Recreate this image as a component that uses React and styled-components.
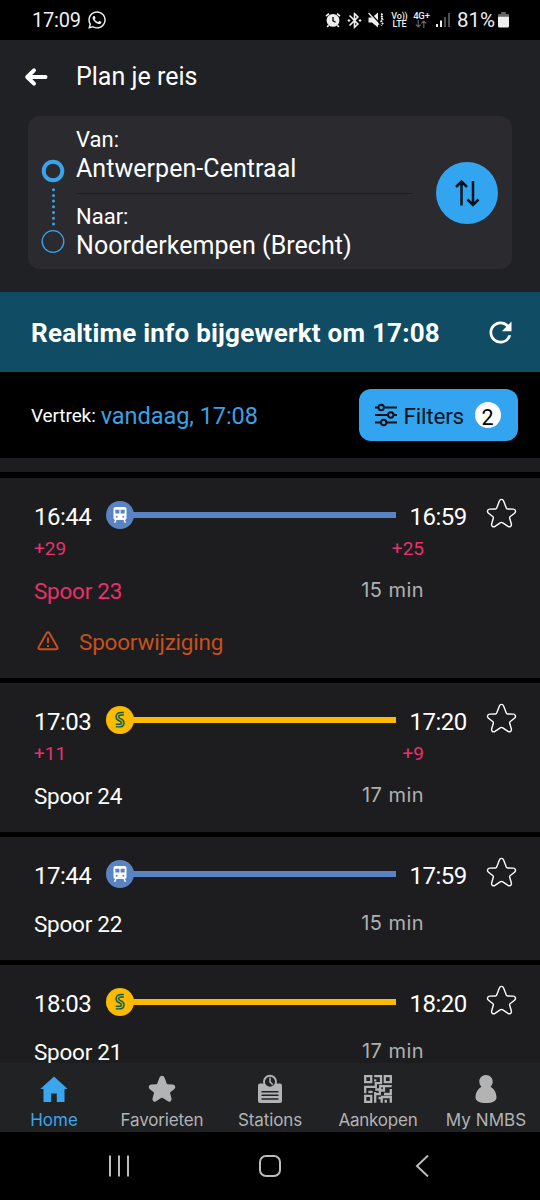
import React, { useState } from 'react';
import styled, { createGlobalStyle } from 'styled-components';
import { FaWhatsapp } from 'react-icons/fa';
import { MdRefresh, MdBluetoothConnected } from 'react-icons/md';

const GlobalStyle = createGlobalStyle`
* {
    box-sizing: border-box;
}

body {
    margin: 0;
    background: #000;
    color: #fff;
    font-family: Roboto, sans-serif;
}

button {
    font: inherit;
    color: inherit;
    background: none;
    border: 0;
    padding: 0;
    cursor: pointer;
}

svg {
    display: block;
    flex: none;
}
`

const Screen = styled.div`
width: 540px;
height: 1200px;
display: flex;
flex-direction: column;
overflow: hidden;
background: #000;
white-space: nowrap;
`

const Label = styled.span`
font-size: ${p => p.$size}px;
line-height: 28px;
letter-spacing: ${p => p.$spacing || 0}px;
color: ${p => p.$color || 'inherit'};
`

/* status bar */

const StatusBar = styled.div`
flex: none;
height: 40px;
padding: 0 31px 0 32px;
display: flex;
align-items: center;
justify-content: space-between;
color: #eee;
`

const StatusLeft = styled.div`
display: flex;
align-items: center;
gap: 6px;
`

const StatusIcons = styled.div`
display: flex;
align-items: center;

> svg + svg {
    margin-left: 4px;
}
`

const TinyStack = styled.div`
width: 17px;
margin-left: ${p => p.$gap}px;
display: flex;
flex-direction: column;
align-items: center;
font-size: ${p => p.$size}px;
font-weight: 500;
line-height: 8.5px;
letter-spacing: -.2px;
`

const Battery = styled.div`
margin-left: 6px;
display: flex;
align-items: center;
gap: 3px;

span {
    margin-left: 4px;
}
`

/* header */

const Header = styled.header`
flex: none;
height: 252px;
background: #202124;
`

const TitleBar = styled.div`
height: 76px;
padding: 0 0 3px 24px;
display: flex;
align-items: center;
gap: 28px;
`

const RouteCard = styled.section`
height: 153px;
margin: 0 28px;
padding: 0 14px 0 13px;
border-radius: 12px;
background: #2b2b2f;
display: flex;
align-items: center;
`

const MarkerSlot = styled.div`
padding-top: 26px;
`

const Stops = styled.div`
width: 337px;
margin-left: 11px;
display: flex;
flex-direction: column;
`

const Stop = styled.div`
height: 76px;
padding-top: 9px;
display: flex;
flex-direction: column;
gap: 1px;

& + & {
    border-top: 1px solid #1e1f22;
}
`

const SwapButton = styled.button`
width: 62px;
height: 62px;
margin-left: auto;
border-radius: 50%;
background: #33a5f0;
display: flex;
align-items: center;
justify-content: center;
`

/* realtime banner and filters */

const Banner = styled.div`
flex: none;
height: 80px;
padding: 2px 23px 0 31px;
display: flex;
align-items: center;
justify-content: space-between;
background: #104c64;
font-weight: 700;

svg {
    margin-bottom: 2px;
}
`

const FilterRow = styled.div`
flex: none;
height: 86px;
padding: 0 22.5px 0 31px;
display: flex;
align-items: center;
justify-content: space-between;
`

const Departure = styled.div`
display: flex;
align-items: center;
gap: 5px;
padding-top: 2px;
`

const FilterButton = styled.button`
width: 159px;
height: 52px;
padding: 0 17px 0 16px;
border-radius: 12px;
background: #33a5f0;
color: #07121b;
display: flex;
align-items: center;
gap: 7px;

> span {
    padding-top: 1px;
}
`

const Count = styled.span`
width: 26px;
height: 26px;
margin-left: auto;
border-radius: 50%;
background: #fff;
color: #000;
font-size: 21.5px;
line-height: 29px;
text-align: center;
`

/* trips */

const Results = styled.main`
flex: 1;
min-height: 0;
overflow: hidden;
display: flex;
flex-direction: column;
gap: 5px;
`

const PreviousTrip = styled.div`
flex: none;
height: 14px;
margin-bottom: 1px;
background: #1d1d1f;
`

const TripCard = styled.article`
flex: none;
padding: 20px 0 7px 34px;
background: #1d1d1f;
`

const TripTop = styled.div`
height: 38px;
display: flex;
align-items: center;
`

const Time = styled.time`
width: ${p => p.$width}px;
padding-bottom: 1px;
font-size: 24px;
line-height: 28px;
letter-spacing: -.5px;
`

const Line = styled.div`
width: 290px;
margin: 0 14px 4px 0;
display: flex;
align-items: center;
color: ${p => p.$color};

&::after {
    content: '';
    flex: 1;
    height: 6px;
    margin-left: -1px;
    background: currentColor;
}
`

const LineBadge = styled.span`
width: 28px;
height: 28px;
border-radius: 50%;
background: currentColor;
`

const StarButton = styled.button`
margin-bottom: 7px;
`

const TripRow = styled.div`
height: ${p => p.$height}px;
width: 390px;
padding-bottom: ${p => p.$lift || 0}px;
display: flex;
align-items: center;
justify-content: space-between;
`

const Duration = styled.span`
font-family: Inter, sans-serif;
font-size: 20px;
line-height: 28px;
color: #b0b0b2;
padding-bottom: 2px;
letter-spacing: .45px;
`

const Warning = styled.div`
height: 51.4px;
padding: 0 0 7.4px 3px;
display: flex;
align-items: center;
gap: 20px;
color: #c8501c;

svg {
    margin-bottom: 2px;
}
`

/* bottom navigation */

const TabBar = styled.nav`
flex: none;
height: 69px;
display: grid;
grid-template-columns: repeat(5, 108px);
background: #202224;
`

const Tab = styled.button`
padding-top: 11px;
display: flex;
flex-direction: column;
align-items: center;
gap: 4px;
color: ${p => p.$active ? '#3ba5ee' : '#b3b3b4'};
font-family: Inter, sans-serif;
font-size: 17px;
line-height: 24px;
letter-spacing: ${p => p.$spacing}px;
`

const TabIcon = styled.span`
height: 30px;
display: flex;
align-items: center;
`

const SystemBar = styled.div`
flex: none;
height: 68px;
padding: 0 42px 0 43px;
display: grid;
grid-template-columns: repeat(3, 1fr);
place-items: center;
color: #bdbdbd;
`

const AlarmIcon = () => (
    <svg width="16" height="16" viewBox="0 0 16 16" fill="none">
        <circle cx="8" cy="8.4" r="6.4" fill="#eee" />
        <path d="M1 4.2 4 1.6M15 4.2 12 1.6M3.6 13.2 2.2 15M12.4 13.2 13.8 15" stroke="#eee" strokeWidth="1.7" />
        <path d="M8 5v3.8l2.6 1.4" stroke="#000" strokeWidth="1.3" />
    </svg>
)

const MuteIcon = () => (
    <svg width="16" height="16" viewBox="0 0 16 16" fill="none">
        <path d="M.5 5.5H4l6-5v15l-6-5H.5z" fill="#eee" />
        <path d="M1.5 .5 11 10.5" stroke="#000" strokeWidth="1.4" />
        <path d="M.6 1 11 12.6" stroke="#eee" strokeWidth="1.3" />
        <path d="M13.2 1.5l1.4 2-1.4 2 1.4 2-1.4 2 1.4 2-1.4 2" stroke="#eee" strokeWidth="1.8" strokeDasharray="2 .8" />
    </svg>
)

const DataArrows = () => (
    <svg width="12" height="8" viewBox="0 0 12 8" fill="none" stroke="#666" strokeWidth="1.2">
        <path d="M3.2 0v7M.8 4.6l2.4 2.4 2.4-2.4M8.8 8V1M6.4 3.4 8.8 1l2.4 2.4" />
    </svg>
)

const SignalIcon = () => (
    <svg width="14" height="14" viewBox="0 0 14 14">
        <path d="M0 11h2v3H0zM4 7.5h2V14H4z" fill="#eee" />
        <path d="M8 4h2v10H8zM12 0h2v14h-2z" fill="#505050" />
    </svg>
)

const BatteryIcon = () => (
    <svg width="11" height="16" viewBox="0 0 12 16" preserveAspectRatio="none">
        <path d="M3.5 0h5v2H11a1 1 0 0 1 1 1v3H0V3a1 1 0 0 1 1-1h2.5z" fill="#666" />
        <path d="M0 4.8h12V14a1.5 1.5 0 0 1-1.5 1.5h-9A1.5 1.5 0 0 1 0 14z" fill="#eee" />
    </svg>
)

const BackArrow = () => (
    <svg width="24" height="20" viewBox="0 0 24 20" fill="none" stroke="#fff" strokeWidth="4" strokeLinecap="round" strokeLinejoin="round">
        <path d="M21.5 10H4M10 3.3 3.2 10l6.8 6.7" />
    </svg>
)

const RouteMarker = () => (
    <svg width="24" height="96" viewBox="0 0 24 96" fill="none" stroke="#38a4eb">
        <circle cx="12" cy="13" r="9.3" strokeWidth="4" />
        <path d="M12.5 31.7v34.7" strokeWidth="3" strokeLinecap="round" strokeDasharray="0 5.7" />
        <circle cx="12" cy="83.5" r="10.8" strokeWidth="1.3" />
    </svg>
)

const SwapIcon = () => (
    <svg width="26" height="30" viewBox="0 0 26 30" fill="none" stroke="#07121b" strokeWidth="2.5">
        <path d="M7.5 27.500V3.500M2 9l5.500-5.500L13 9M19 3v24M13.500 21.500 19 27l5.500-5.500" />
    </svg>
)

const FilterIcon = () => (
    <svg width="22" height="24" viewBox="0 0 22 24" fill="none" stroke="#07121b" strokeWidth="2">
        <path d="M0 4.5h3M9.5 4.5H22M0 12h12.5M19 12h3M0 19.5h5.5M12 19.5h10" />
        <circle cx="6.2" cy="4.5" r="2.7" />
        <circle cx="15.8" cy="12" r="2.7" />
        <circle cx="8.7" cy="19.5" r="2.7" />
    </svg>
)

const TrainIcon = () => (
    <svg width="28" height="28" viewBox="0 0 28 28">
        <path d="M9.5 6h9a2 2 0 0 1 2 2v9a2 2 0 0 1-2 2h-9a2 2 0 0 1-2-2V8a2 2 0 0 1 2-2z" fill="#fff" />
        <path d="M9.3 8.8h4.1v3.7H9.3zM14.6 8.8h4.1v3.7h-4.1z" fill="#5a83c4" />
        <circle cx="10.6" cy="15.8" r="1" fill="#5a83c4" />
        <circle cx="17.4" cy="15.8" r="1" fill="#5a83c4" />
        <path d="M10 18.5l-1.4 3.2M18 18.5l1.4 3.2" stroke="#fff" strokeWidth="1.5" />
    </svg>
)

const SuburbanIcon = () => (
    <svg width="28" height="28" viewBox="0 0 28 28" fill="none">
        <path d="M17.800 7.800h-2.600c-4.600 0-5 4.400-1.600 5.800 4.600 1.700 4 6-.4 6H9.800" stroke="#17594d" strokeWidth="4" />
        <path d="M18.200 7.800h-3c-4.600 0-5 4.400-1.600 5.800 4.600 1.700 4 6-.4 6H9.400" stroke="#b5bd2c" strokeWidth="1.100" />
    </svg>
)

const starPath = 'M12.9 2.4c.8-2 3.4-2 4.2 0l2.7 7.2c.2.6.7.9 1.300.9l5.600.1c2.300.1 3.100 2.700 1.300 4.100l-4.200 3.300c-.6.5-.8 1-.6 1.700l1.600 5.600c.6 2.300-1.400 3.700-3.300 2.500l-5.200-3.500c-.9-.6-1.700-.6-2.600 0l-5.200 3.500c-1.900 1.200-3.900-.2-3.300-2.500l1.600-5.600c.2-.7 0-1.200-.6-1.700L2 14.700c-1.800-1.400-1-4 1.300-4.100l5.600-.1c.6 0 1.100-.3 1.300-.9z'

const StarIcon = ({ size, filled }) => (
    <svg width={size} height={size} viewBox="-.5 -.5 31 31" fill={filled ? 'currentColor' : 'none'} stroke={filled ? 'currentColor' : '#fff'} strokeWidth="1.4">
        <path d={starPath} />
    </svg>
)

const WarningIcon = () => (
    <svg width="22" height="20" viewBox="0 0 22 20" fill="none" stroke="currentColor" strokeWidth="1.9" strokeLinejoin="round">
        <path d="M9.5 2.2 1.6 16.2c-.6 1.1-.1 2 1.2 2h16.4c1.3 0 1.8-.9 1.2-2L12.5 2.2c-.7-1.2-2.3-1.2-3 0z" />
        <path d="M11 6.5v5.8M11 14v2" />
    </svg>
)

const HomeIcon = () => (
    <svg width="28" height="28" viewBox="0 0 28 28" fill="currentColor">
        <path d="M14 1.500.3 14h3.200v13h7.700v-8.500h5.600V27h7.700V14h3.200z" />
    </svg>
)

const StationIcon = () => (
    <svg width="24" height="30" viewBox="0 0 24 30" fill="none">
        <rect y="9.5" width="24" height="19.5" rx="2" fill="currentColor" />
        <circle cx="12" cy="7.7" r="6" fill="#202224" stroke="currentColor" strokeWidth="1.9" />
        <path d="M12 3.5v4.4l2.8 2.8" stroke="currentColor" strokeWidth="1.5" />
        <path d="M3.5 17.700h17M3.500 21.300h17M3.500 24.900h17" stroke="#202224" strokeWidth="1.5" />
    </svg>
)

const CodeIcon = () => (
    <svg width="28" height="28" viewBox="0 0 28 28" fill="none" stroke="currentColor" strokeWidth="2.3">
        <path d="M1.2 1.2h6v6h-6zM20.8 1.2h6v6h-6zM1.2 20.8h6v6h-6z" />
        <path d="M10.2 1.2H17v7h-5.2v3.6H1.2v6.4M11.2 4.2v2.3M4.4 16.8h4.2M11.2 14.5h5V11.2h11.5M20 11v4.500h-4.200v3.600h-4.600M26.800 14v5H20M11.200 17v10.800M14.500 23h3.200v4.800M17 22h9.800v5.800M21.800 24.800v3" />
    </svg>
)

const PersonIcon = () => (
    <svg width="22" height="28" viewBox="0 0 22 28" fill="currentColor">
        <path d="M11 0c4 0 6.700 3 6.700 6.700 0 2.200-.9 3.700-2.200 5 3.900 2.200 6 6.500 6 10.800 0 3.500-4 5.500-10.500 5.500S.5 26 .5 22.500c0-4.300 2.100-8.600 6-10.800-1.300-1.300-2.200-2.800-2.200-5C4.300 3 7 0 11 0z" />
    </svg>
)

const lines = {
    train: { color: '#5a83c4', icon: <TrainIcon /> },
    suburban: { color: '#fcba00', icon: <SuburbanIcon /> },
}

const trips = [
    { id: 1, line: 'train', from: '16:44', to: '16:59', delays: ['+29', '+25'], platform: 'Spoor 23', duration: '15 min', changed: 'Spoorwijziging' },
    { id: 2, line: 'suburban', from: '17:03', to: '17:20', delays: ['+11', '+9'], platform: 'Spoor 24', duration: '17 min' },
    { id: 3, line: 'train', from: '17:44', to: '17:59', platform: 'Spoor 22', duration: '15 min' },
    { id: 4, line: 'suburban', from: '18:03', to: '18:20', platform: 'Spoor 21', duration: '17 min' },
]

const tabs = [
    { name: 'Home', icon: <HomeIcon />, spacing: 0 },
    { name: 'Favorieten', icon: <StarIcon size={28} filled />, spacing: -.15 },
    { name: 'Stations', icon: <StationIcon />, spacing: -.1 },
    { name: 'Aankopen', icon: <CodeIcon />, spacing: -.2 },
    { name: 'My NMBS', icon: <PersonIcon />, spacing: .1 },
]

const pink = '#e8306c'

const Trip = ({ trip }) => {
    const { color, icon } = lines[trip.line]

    return (
        <TripCard>
            <TripTop>
                <Time $width={71.5}>{trip.from}</Time>
                <Line $color={color}><LineBadge>{icon}</LineBadge></Line>
                <Time $width={76}>{trip.to}</Time>
                <StarButton aria-label="Favoriet"><StarIcon size={31} /></StarButton>
            </TripTop>
            {trip.delays && (
                <TripRow $height={26}>
                    {trip.delays.map(delay => <Label key={delay} $size={19} $color={pink}>{delay}</Label>)}
                </TripRow>
            )}
            <TripRow $height={58} $lift={1}>
                <Label $size={22.5} $spacing={-.25} $color={trip.changed && pink}>{trip.platform}</Label>
                <Duration>{trip.duration}</Duration>
            </TripRow>
            {trip.changed && (
                <Warning>
                    <WarningIcon />
                    <Label $size={22.5} $spacing={-.2}>{trip.changed}</Label>
                </Warning>
            )}
        </TripCard>
    )
}

const App = () => {

    const [active, setActive] = useState('Home')

    return (
        <Screen>
            <GlobalStyle />
            <StatusBar>
                <StatusLeft>
                    <Label $size={20} $spacing={-.2}>17:09</Label>
                    <FaWhatsapp size={20} />
                </StatusLeft>
                <StatusIcons>
                    <AlarmIcon />
                    <MdBluetoothConnected size={19} />
                    <MuteIcon />
                    <TinyStack $gap={7} $size={9}>
                        <span>Vo))</span>
                        <span>LTE</span>
                    </TinyStack>
                    <TinyStack $gap={5} $size={9.5}>
                        <span>4G+</span>
                        <DataArrows />
                    </TinyStack>
                    <Battery>
                        <SignalIcon />
                        <Label $size={20.5}>81%</Label>
                        <BatteryIcon />
                    </Battery>
                </StatusIcons>
            </StatusBar>

            <Header>
                <TitleBar>
                    <BackArrow />
                    <Label $size={25}>Plan je reis</Label>
                </TitleBar>
                <RouteCard>
                    <MarkerSlot>
                        <RouteMarker />
                    </MarkerSlot>
                    <Stops>
                        <Stop>
                            <Label $size={22}>Van:</Label>
                            <Label $size={25} $spacing={.05}>Antwerpen-Centraal</Label>
                        </Stop>
                        <Stop>
                            <Label $size={22}>Naar:</Label>
                            <Label $size={25} $spacing={.05}>Noorderkempen (Brecht)</Label>
                        </Stop>
                    </Stops>
                    <SwapButton aria-label="Wissel"><SwapIcon /></SwapButton>
                </RouteCard>
            </Header>

            <Banner>
                <Label $size={26} $spacing={.22}>Realtime info bijgewerkt om 17:08</Label>
                <MdRefresh size={33} />
            </Banner>

            <FilterRow>
                <Departure>
                    <Label $size={19} $spacing={-.1}>Vertrek:</Label>
                    <Label $size={23.5} $spacing={-.05} $color="#3ba0e6">vandaag, 17:08</Label>
                </Departure>
                <FilterButton>
                    <FilterIcon />
                    <Label $size={22.5} $spacing={-.2}>Filters</Label>
                    <Count>2</Count>
                </FilterButton>
            </FilterRow>

            <Results>
                <PreviousTrip />
                {trips.map(trip => <Trip key={trip.id} trip={trip} />)}
            </Results>

            <TabBar>
                {tabs.map(({ name, icon, spacing }) => (
                    <Tab key={name} $active={active === name} $spacing={spacing} onClick={() => setActive(name)}>
                        <TabIcon>{icon}</TabIcon>
                        <span>{name}</span>
                    </Tab>
                ))}
            </TabBar>

            <SystemBar>
                <svg width="22" height="22" viewBox="0 0 22 22" stroke="currentColor" strokeWidth="2">
                    <path d="M2 .5v21M11 .5v21M20 .5v21" />
                </svg>
                <svg width="22" height="22" viewBox="0 0 22 22" fill="none" stroke="currentColor" strokeWidth="2">
                    <rect x="1" y="1" width="20" height="20" rx="6" />
                </svg>
                <svg width="14" height="22" viewBox="0 0 14 22" fill="none" stroke="currentColor" strokeWidth="2">
                    <path d="M13 .6 2 11l11 10.4" />
                </svg>
            </SystemBar>
        </Screen>
    );
};

export default App;
